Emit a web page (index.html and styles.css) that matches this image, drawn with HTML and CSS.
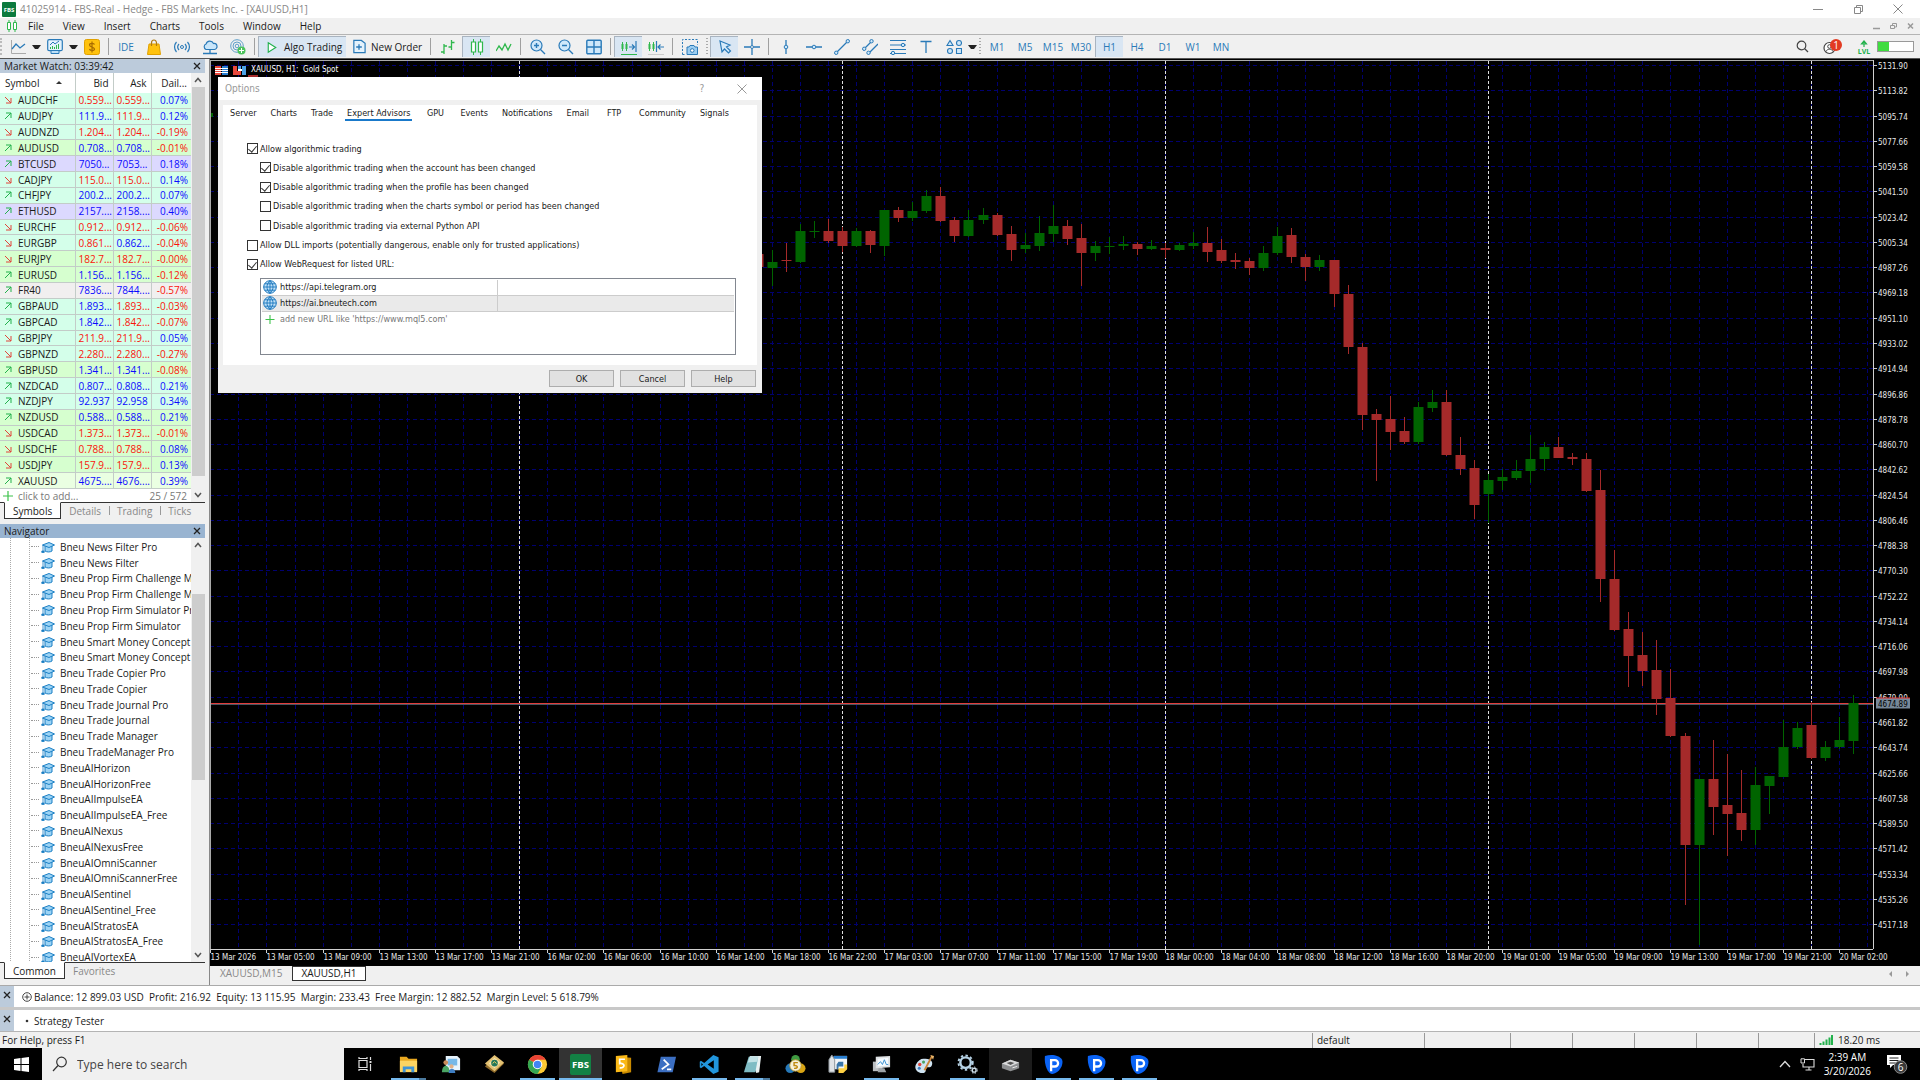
FILE: index.html
```html
<!DOCTYPE html>
<html lang="en">
<head>
    <meta charset="UTF-8">
    <title>41025914 - FBS-Real - Hedge - FBS Markets Inc. - [XAUUSD,H1]</title>
    <link rel="stylesheet" href="styles.css">
</head>
<body>
    <svg class="defs">
        <symbol id="i-up" viewBox="0 0 8 8"><path d="M1 7 7 1M2 1h5v5" fill="none" stroke="#22b14c"/></symbol>
        <symbol id="i-down" viewBox="0 0 8 8"><path d="M1 1 7 7M7 2v5H2" fill="none" stroke="#e0453a"/></symbol>
        <symbol id="i-plus" viewBox="0 0 10 10"><path d="M5 0v10M0 5h10" stroke="#3cc24a" stroke-width="1.2"/></symbol>
        <symbol id="i-ea" viewBox="0 0 14 12">
            <path d="M4 5v5c2 1.300 5 1.300 7 0V5" fill="#9bd3f5" stroke="#1b7fc4"/>
            <path d="M1.500 4 8 1.500 13.500 4 8 6.500z" fill="#9bd3f5" stroke="#1b7fc4"/>
            <path d="M2 4v6M.8 10h2.400v1.500H.8z" fill="#1b7fc4" stroke="#1b7fc4" stroke-width=".8"/>
        </symbol>
        <symbol id="i-globe" viewBox="0 0 14 14">
            <circle cx="7" cy="7" r="6.300" fill="#bfe0f7" stroke="#1a76bd"/>
            <path d="M7 .7v12.600M.7 7h12.600M1.700 3.800h10.600M1.700 10.200h10.600M7 .7c-4 3.500-4 9 0 12.600M7 .7c4 3.500 4 9 0 12.600" fill="none" stroke="#1a76bd" stroke-width=".9"/>
        </symbol>
        <symbol id="i-p" viewBox="0 0 22 22">
            <path d="M2 2C9 0 17 1 20 6c2 5-3 14-10 15C5 21 1 11 2 2z" fill="#0a63f5"/>
            <path d="M8.500 18V6.500h4a3.300 3.300 0 0 1 0 6.600H8.500" fill="none" stroke="#fff" stroke-width="2.400"/>
        </symbol>
        <symbol id="i-x" viewBox="0 0 8 8"><path d="M1 1 7 7M7 1 1 7" stroke="#222" stroke-width="1.300"/></symbol>
        <symbol id="i-chev-up" viewBox="0 0 8 6"><path d="M1 5 4 1.500 7 5" fill="none" stroke="#555" stroke-width="1.500"/></symbol>
        <symbol id="i-chev-down" viewBox="0 0 8 6"><path d="M1 1 4 4.500 7 1" fill="none" stroke="#555" stroke-width="1.500"/></symbol>
    </svg>
    <div class="app">
        <header class="titlebar">
            <svg class="logo" viewBox="0 0 14 15"><rect width="14" height="15" rx="1" fill="#0c7a3e"/><text x="7" y="10" text-anchor="middle" font-size="6" font-weight="700" fill="#fff">FBS</text></svg>
            <h1 class="title">41025914 - FBS-Real - Hedge - FBS Markets Inc. - [XAUUSD,H1]</h1>
            <div class="win-btns">
                <button aria-label="Minimize"><svg width="12" height="12" viewBox="0 0 12 12"><path d="M1 6.500h10" stroke="#888"/></svg></button>
                <button aria-label="Restore"><svg width="12" height="12" viewBox="0 0 12 12"><path d="M2.500 4.500h6v6h-6zM4.500 4.500v-2h6v6h-2" fill="none" stroke="#888"/></svg></button>
                <button aria-label="Close"><svg width="12" height="12" viewBox="0 0 12 12"><path d="M1.500 1.500l9 9M10.500 1.500l-9 9" stroke="#888"/></svg></button>
            </div>
        </header>
        <nav class="menubar">
            <svg class="menu-icon" width="12" height="12" viewBox="0 0 12 12"><path d="M3 0v12M9 0v12" stroke="#2fb84c"/><path d="M1.500 2.500h3v7h-3zM7.500 2.500h3v7h-3z" fill="#fff" stroke="#2fb84c"/></svg>
            <button>File</button>
            <button>View</button>
            <button>Insert</button>
            <button>Charts</button>
            <button>Tools</button>
            <button>Window</button>
            <button>Help</button>
            <div class="doc-btns">
                <button aria-label="Minimize chart"><svg width="9" height="8" viewBox="0 0 9 8"><path d="M1 6.500h7" stroke="#999" stroke-width="1.500"/></svg></button>
                <button aria-label="Restore chart"><svg width="9" height="8" viewBox="0 0 9 8"><path d="M1.500 3.500h4v3h-4zM3.500 3V1.500h4v3.500H6" fill="none" stroke="#999"/></svg></button>
                <button aria-label="Close chart"><svg width="9" height="8" viewBox="0 0 9 8"><path d="M2 1.500l5 5M7 1.500l-5 5" stroke="#999" stroke-width="1.500"/></svg></button>
            </div>
        </nav>
        <div class="toolbar">
            <span class="grip"></span>
            <button class="tool" aria-label="Line studies"><svg viewBox="0 0 16 16"><path d="M1.500 1v13.500H16" fill="none" stroke="#aaa"/><path d="M2 10 6 5l4 4 5-4" fill="none" stroke="#2a7ab8" stroke-width="1.300"/></svg></button>
            <button class="drop" aria-label="More line studies"></button>
            <button class="tool" aria-label="Templates"><svg viewBox="0 0 16 16"><rect x=".7" y=".7" width="14.600" height="11" rx="1.500" fill="#e4f2fc" stroke="#2a7ab8" stroke-width="1.200"/><path d="M4 12v2.500h8V12" fill="#bcdff7" stroke="#2a7ab8"/><path d="M3 6l3-3 2 2 4-3" fill="none" stroke="#2a7ab8"/><path d="M3.500 10V8M5.500 10V7M7.500 10V8M9.500 10V6M11.500 10V5" stroke="#2fb84c"/></svg></button>
            <button class="drop" aria-label="More templates"></button>
            <button class="tool" aria-label="Market"><svg viewBox="0 0 16 16"><rect x=".5" y=".5" width="15" height="15" rx="2" fill="#ffc20e" stroke="#e0a000"/><path d="M10.500 5.500C10 4 5.500 3.800 5.500 6S10.500 8 10.500 10s-4.500 2-5 0M8 2.500v11" fill="none" stroke="#a86b00" stroke-width="1.200"/></svg></button>
            <span class="sep"></span>
            <button class="tool">IDE</button>
            <button class="tool" aria-label="Shop"><svg viewBox="0 0 16 16"><path d="M3 5h10l1.500 10.500h-13z" fill="#ffc20e" stroke="#e0a000"/><path d="M5.500 7V4a2.500 3 0 0 1 5 0v3" fill="none" stroke="#b07a10" stroke-width="1.200"/></svg></button>
            <button class="tool" aria-label="Signals"><svg viewBox="0 0 16 16"><circle cx="8" cy="8" r="1.500" fill="none" stroke="#2a7ab8"/><path d="M5 5a4.500 4.500 0 0 0 0 6M11 5a4.500 4.500 0 0 1 0 6M2.500 3a7.500 7.500 0 0 0 0 10M13.500 3a7.500 7.500 0 0 1 0 10" fill="none" stroke="#2a7ab8" stroke-width="1.200"/></svg></button>
            <button class="tool" aria-label="VPS"><svg viewBox="0 0 16 16"><path d="M4 10.500a3 3 0 0 1 0-5.500 4 4 0 0 1 7.500-.5 3 3 0 0 1 1 6z" fill="#c9e6fa" stroke="#2a7ab8" stroke-width="1.200"/><path d="M8 11v3M1 14.500h14M6 14.500h4" stroke="#2a7ab8" stroke-width="1.300"/></svg></button>
            <button class="tool" aria-label="Copy trading"><svg viewBox="0 0 16 16"><circle cx="7" cy="7" r="6.300" fill="none" stroke="#5f9fc9"/><circle cx="7" cy="7" r="4" fill="none" stroke="#5f9fc9"/><circle cx="7" cy="7" r="1.800" fill="none" stroke="#5f9fc9"/><circle cx="11.500" cy="11.500" r="4" fill="#4cc35c"/><path d="M11.500 9v5M9 11.500h5" stroke="#fff"/></svg></button>
            <span class="sep"></span>
            <button class="wide on"><svg viewBox="0 0 16 16"><path d="M4 3l8 5-8 5z" fill="#fff" stroke="#22b14c" stroke-width="1.200"/></svg>Algo Trading</button>
            <button class="wide"><svg viewBox="0 0 16 16"><path d="M2.500 1.500h8l4 3v10h-12z" fill="#e4f2fc" stroke="#2a7ab8" stroke-width="1.300"/><path d="M8 5.500v6M5 8.500h6" stroke="#2a7ab8" stroke-width="1.400"/></svg>New Order</button>
            <span class="sep"></span>
            <button class="tool" aria-label="Bar chart"><svg viewBox="0 0 16 16"><path d="M4 5v10M1 13h3M4 7h3M11.500 1v10M8.500 8h3M11.500 3.500h3" fill="none" stroke="#2fb84c" stroke-width="1.300"/></svg></button>
            <button class="tool on" aria-label="Candles"><svg viewBox="0 0 16 16"><path d="M4.500 0v16M11.500 0v16" stroke="#2fb84c"/><path d="M2.500 3h4v10h-4zM9.500 3h4v10h-4z" fill="#fff" stroke="#2fb84c" stroke-width="1.200"/></svg></button>
            <button class="tool" aria-label="Line chart"><svg viewBox="0 0 16 16"><path d="M0 12l3-5 3 4 3-6 3 6 3-6" fill="none" stroke="#2fb84c" stroke-width="1.300"/></svg></button>
            <span class="sep"></span>
            <button class="tool" aria-label="Zoom in"><svg viewBox="0 0 16 16"><circle cx="6.500" cy="6.500" r="5.500" fill="#cfe8fa" stroke="#2a7ab8" stroke-width="1.200"/><path d="M10.500 10.500 15 15M6.500 4v5M4 6.500h5" stroke="#2a7ab8" stroke-width="1.400"/></svg></button>
            <button class="tool" aria-label="Zoom out"><svg viewBox="0 0 16 16"><circle cx="6.500" cy="6.500" r="5.500" fill="#cfe8fa" stroke="#2a7ab8" stroke-width="1.200"/><path d="M10.500 10.500 15 15M4 6.500h5" stroke="#2a7ab8" stroke-width="1.400"/></svg></button>
            <button class="tool" aria-label="Tile windows"><svg viewBox="0 0 16 16"><rect x=".8" y="1.300" width="14.400" height="13.400" rx="1" fill="#cfe8fa" stroke="#2a7ab8" stroke-width="1.400"/><path d="M8 1v14M1 8h14" stroke="#2a7ab8" stroke-width="1.400"/></svg></button>
            <span class="sep"></span>
            <button class="tool on" aria-label="Auto scroll"><svg viewBox="0 0 16 16"><path d="M1.500 3v9M5.500 3v9M0 15.500h16" stroke="#2fb84c"/><path d="M.5 5h2v5h-2zM4.500 5h2v5h-2z" fill="#2fb84c"/><path d="M8 8h5M11 5.500 13.500 8 11 10.500M15 2v11" fill="none" stroke="#2a7ab8" stroke-width="1.200"/></svg></button>
            <button class="tool" aria-label="Chart shift"><svg viewBox="0 0 16 16"><path d="M1.500 3v9M5.500 3v9" stroke="#2fb84c"/><path d="M.5 5h2v5h-2zM4.500 5h2v5h-2z" fill="#2fb84c"/><path d="M10 8h6M12.500 5.500 10 8l2.500 2.500M8.500 2v11" fill="none" stroke="#2a7ab8" stroke-width="1.200"/><path d="M0 15.500h16" stroke="#ccc"/></svg></button>
            <span class="sep"></span>
            <button class="tool" aria-label="Screenshot"><svg viewBox="0 0 16 16"><path d="M.5 15.500V.5h15V6M.5 15.500H4" fill="none" stroke="#2a7ab8" stroke-dasharray="2 1.500"/><path d="M5 8h2l1-1.500h4L13 8h2.500v7.500H5z" fill="#9ccdf0" stroke="#2a7ab8"/><circle cx="10.200" cy="11.500" r="1.800" fill="#fff" stroke="#2a7ab8"/></svg></button>
            <span class="sep dots"></span>
            <button class="tool on" aria-label="Cursor"><svg viewBox="0 0 16 16"><path d="M3 2l10 4-3.500 2 4 4-2 2-4-4L5 13z" fill="#d6ebfa" stroke="#2a7ab8" stroke-width="1.200"/></svg></button>
            <button class="tool" aria-label="Crosshair"><svg viewBox="0 0 16 16"><path d="M8 0v6M8 10v6M0 8h6M10 8h6" stroke="#2a7ab8" stroke-width="1.300"/><circle cx="8" cy="8" r="1.500" fill="none" stroke="#2a7ab8"/></svg></button>
            <span class="sep"></span>
            <button class="tool" aria-label="Vertical line"><svg viewBox="0 0 16 16"><path d="M8 1v5M8 10v5" stroke="#2a7ab8" stroke-width="1.300"/><circle cx="8" cy="8" r="1.800" fill="#cfe8fa" stroke="#2a7ab8"/></svg></button>
            <button class="tool" aria-label="Horizontal line"><svg viewBox="0 0 16 16"><path d="M0 8h6M10 8h6" stroke="#2a7ab8" stroke-width="1.300"/><circle cx="8" cy="8" r="1.800" fill="#cfe8fa" stroke="#2a7ab8"/></svg></button>
            <button class="tool" aria-label="Trend line"><svg viewBox="0 0 16 16"><path d="M3 13 13 3" stroke="#2a7ab8" stroke-width="1.300"/><circle cx="2.200" cy="13.800" r="1.700" fill="#cfe8fa" stroke="#2a7ab8"/><circle cx="13.800" cy="2.200" r="1.700" fill="#cfe8fa" stroke="#2a7ab8"/></svg></button>
            <button class="tool" aria-label="Channel"><svg viewBox="0 0 16 16"><path d="M3 9 9 3M6 15 16 5" stroke="#2a7ab8" stroke-width="1.300"/><circle cx="2.200" cy="9.800" r="1.700" fill="#cfe8fa" stroke="#2a7ab8"/><circle cx="9.500" cy="2.200" r="1.700" fill="#cfe8fa" stroke="#2a7ab8"/><circle cx="6.500" cy="13.800" r="1.700" fill="#cfe8fa" stroke="#2a7ab8"/></svg></button>
            <button class="tool" aria-label="Fibonacci"><svg viewBox="0 0 16 16"><path d="M0 1.500h16M0 6h16M0 10.500h16M0 14.500h16" stroke="#2a7ab8" stroke-width="1.200"/><circle cx="13" cy="6" r="1.700" fill="#cfe8fa" stroke="#2a7ab8"/><circle cx="3" cy="14" r="1.700" fill="#cfe8fa" stroke="#2a7ab8"/></svg></button>
            <button class="tool" aria-label="Text"><svg viewBox="0 0 16 16"><path d="M2.500 2.500h11M8 2.500V14" stroke="#2a7ab8" stroke-width="1.300"/></svg></button>
            <button class="tool" aria-label="Shapes"><svg viewBox="0 0 16 16"><path d="M4 1.500 7 6.500H1zM10.500 9.500h5v5h-5z" fill="#cfe8fa" stroke="#2a7ab8" stroke-width="1.100"/><circle cx="13" cy="4" r="2.500" fill="#cfe8fa" stroke="#2a7ab8" stroke-width="1.100"/><circle cx="4" cy="12" r="2.500" fill="#cfe8fa" stroke="#2a7ab8" stroke-width="1.100"/></svg></button>
            <button class="drop" aria-label="More shapes"></button>
            <span class="sep dots"></span>
            <button class="tool">M1</button>
            <button class="tool">M5</button>
            <button class="tool">M15</button>
            <button class="tool">M30</button>
            <button class="tool on">H1</button>
            <button class="tool">H4</button>
            <button class="tool">D1</button>
            <button class="tool">W1</button>
            <button class="tool">MN</button>
            <div class="tool-right">
                <button aria-label="Search"><svg width="13" height="13" viewBox="0 0 13 13"><circle cx="5.500" cy="5.500" r="4.300" fill="none" stroke="#444" stroke-width="1.200"/><path d="M8.500 8.500 12 12" stroke="#444" stroke-width="1.200"/></svg></button>
                <button aria-label="Account"><svg width="20" height="16" viewBox="0 0 20 16"><circle cx="6.500" cy="9" r="5.500" fill="#fff" stroke="#444" stroke-width="1.200"/><circle cx="6.500" cy="7.500" r="1.800" fill="none" stroke="#444"/><path d="M3 12.500c1-3 6-3 7 0" fill="none" stroke="#444"/><circle cx="13" cy="6" r="6" fill="#e23b22"/><text x="13" y="9.500" text-anchor="middle" font-size="10" fill="#fff">1</text></svg></button>
                <button aria-label="Level"><svg width="14" height="14" viewBox="0 0 14 14"><path d="M7 7V2M4.500 4 7 1l2.500 3z" fill="none" stroke="#22b14c" stroke-width="1.200"/><text x="7" y="13.500" text-anchor="middle" font-size="7" font-weight="700" fill="#22b14c">LVL</text></svg></button>
                <div class="load"><i></i></div>
            </div>
        </div>
        <main class="main">
            <aside class="side">
                <section class="panel market">
                    <h2 class="panel-title">Market Watch: 03:39:42<button aria-label="Close Market Watch"><svg width="8" height="8"><use href="#i-x"/></svg></button></h2>
                    <div class="panel-body">
                        <div class="watch">
                            <table class="quotes">
                                <colgroup><col class="c-sym"><col class="c-num"><col class="c-num"><col class="c-day"></colgroup>
                                <thead><tr><th>Symbol<i class="sort"></i></th><th>Bid</th><th>Ask</th><th>Dail...</th></tr></thead>
                                <tbody id="quotes"></tbody>
                            </table>
                            <div class="add-row"><svg width="10" height="10"><use href="#i-plus"/></svg><span>click to add...</span><b>25 / 572</b></div>
                        </div>
                        <div class="scroll watch-scroll"><svg width="8" height="6"><use href="#i-chev-up"/></svg><i class="thumb"></i><i class="rest"></i><svg width="8" height="6"><use href="#i-chev-down"/></svg></div>
                    </div>
                    <div class="tabs">
                        <button class="active">Symbols</button><button>Details</button><button>Trading</button><button>Ticks</button>
                    </div>
                </section>
                <section class="panel navigator">
                    <h2 class="panel-title focus">Navigator<button aria-label="Close Navigator"><svg width="8" height="8"><use href="#i-x"/></svg></button></h2>
                    <div class="panel-body">
                        <ul class="tree" id="tree"></ul>
                        <div class="scroll nav-scroll"><svg width="8" height="6"><use href="#i-chev-up"/></svg><i class="lead"></i><i class="thumb"></i><i class="rest"></i><svg width="8" height="6"><use href="#i-chev-down"/></svg></div>
                    </div>
                    <div class="tabs nav-tabs">
                        <button class="active">Common</button><button>Favorites</button>
                    </div>
                </section>
            </aside>
            <section class="work">
                <div class="chart" id="chart">
                    <svg class="plot" id="plot"></svg>
                    <div class="chart-title">
                        <svg width="13" height="9" viewBox="0 0 13 9"><path d="M0 0h6v9H0z" fill="#e8483c"/><path d="M7 0h6v9H7z" fill="#2a7fd0"/><path d="M0 2.500h13M0 4.500h13M0 6.500h13" stroke="#fff"/></svg>
                        <svg width="13" height="9" viewBox="0 0 13 9"><path d="M0 0h4v5h4v4H0z" fill="#e8483c"/><path d="M9 0h4v9H9zM5 0h3v3H5z" fill="#4ea3e6"/><path d="M5 3h4v2H5z" fill="#fff"/></svg>
                        <span>XAUUSD, H1:&nbsp; Gold Spot</span>
                    </div>
                </div>
                <div class="doc-tabs">
                    <button>XAUUSD,M15</button>
                    <button class="active">XAUUSD,H1</button>
                    <span class="doc-arrows"><i class="prev"></i><i class="next"></i></span>
                </div>
            </section>
            <section class="dialog" role="dialog" aria-label="Options">
                <div class="dialog-head">
                    <h2>Options</h2>
                    <button aria-label="Context help">?</button>
                    <button aria-label="Close dialog"><svg width="10" height="10" viewBox="0 0 10 10"><path d="M.5.5l9 9M9.500.5l-9 9" stroke="#999"/></svg></button>
                </div>
                <div class="dialog-body">
                    <div class="pages">
                        <button>Server</button>
                        <button>Charts</button>
                        <button>Trade</button>
                        <button class="active">Expert Advisors</button>
                        <button>GPU</button>
                        <button>Events</button>
                        <button>Notifications</button>
                        <button>Email</button>
                        <button>FTP</button>
                        <button>Community</button>
                        <button>Signals</button>
                    </div>
                    <div class="options">
                        <label><input type="checkbox" checked>Allow algorithmic trading</label>
                        <label class="sub"><input type="checkbox" checked>Disable algorithmic trading when the account has been changed</label>
                        <label class="sub"><input type="checkbox" checked>Disable algorithmic trading when the profile has been changed</label>
                        <label class="sub"><input type="checkbox">Disable algorithmic trading when the charts symbol or period has been changed</label>
                        <label class="sub"><input type="checkbox">Disable algorithmic trading via external Python API</label>
                        <label><input type="checkbox">Allow DLL imports (potentially dangerous, enable only for trusted applications)</label>
                        <label><input type="checkbox" checked>Allow WebRequest for listed URL:</label>
                    </div>
                    <ul class="urls">
                        <li><span><svg width="14" height="14"><use href="#i-globe"/></svg>https://api.telegram.org</span></li>
                        <li class="sel"><span><svg width="14" height="14"><use href="#i-globe"/></svg>https://ai.bneutech.com</span></li>
                        <li class="new"><span><svg width="14" height="9"><use href="#i-plus"/></svg>add new URL like 'https://www.mql5.com'</span></li>
                    </ul>
                </div>
                <div class="dialog-foot">
                    <button>OK</button>
                    <button>Cancel</button>
                    <button>Help</button>
                </div>
            </section>
        </main>
        <section class="dock balance">
            <button class="dock-x" aria-label="Close Toolbox"><svg width="8" height="8"><use href="#i-x"/></svg></button>
            <svg width="10" height="10" viewBox="0 0 10 10"><circle cx="5" cy="5" r="4.300" fill="none" stroke="#444"/><path d="M5 2.500v5M2.500 5h5" stroke="#444"/></svg>
            <p>Balance: 12 899.03 USD&nbsp; Profit: 216.92&nbsp; Equity: 13 115.95&nbsp; Margin: 233.43&nbsp; Free Margin: 12 882.52&nbsp; Margin Level: 5 618.79%</p>
        </section>
        <section class="dock tester">
            <button class="dock-x" aria-label="Close Strategy Tester"><svg width="8" height="8"><use href="#i-x"/></svg></button>
            <svg width="10" height="10" viewBox="0 0 10 10"><circle cx="5" cy="5" r="1.300" fill="#333"/></svg>
            <p>Strategy Tester</p>
        </section>
        <footer class="status">
            <span class="hint">For Help, press F1</span>
            <span class="cell w112">default</span>
            <span class="cell w86"></span>
            <span class="cell w62"></span>
            <span class="cell w62"></span>
            <span class="cell w62"></span>
            <span class="cell w62"></span>
            <span class="cell w56"></span>
            <span class="cell w106"><svg width="14" height="10" viewBox="0 0 14 10"><path d="M1.500 8v2M4.500 6.500V10M7.500 4.500V10M10.500 2.500V10M13 0v10" stroke="#22b14c" stroke-width="2"/></svg>18.20 ms</span>
        </footer>
        <div class="taskbar">
            <button class="start" aria-label="Start"><svg width="15" height="15" viewBox="0 0 15 15"><path d="M0 2l6.500-1v6H0zM7.500.9 15 0v7H7.500zM0 8h6.500v6L0 13zM7.500 8H15v7l-7.500-1z" fill="#fff"/></svg></button>
            <div class="search">
                <svg width="16" height="16" viewBox="0 0 16 16"><circle cx="9.500" cy="6" r="4.800" fill="none" stroke="#333" stroke-width="1.200"/><path d="M6 9.500 1 15" stroke="#333" stroke-width="1.200"/></svg>
                <input type="text" placeholder="Type here to search" aria-label="Type here to search">
            </div>
            <button class="task" aria-label="Task View"><svg width="15" height="14" viewBox="0 0 15 14"><path d="M1 3.500h8v7H1zM1 0v1.500h8V0M1 14v-1.500h8V14M12.500 0v3M12.500 7v7" fill="none" stroke="#ddd" stroke-width="1.200"/><path d="M11.500 4h2v2h-2z" fill="#ddd"/></svg></button>
            <button class="task run more" aria-label="File Explorer"><svg viewBox="0 0 22 22"><path d="M2 3h7l2 2h9v13H2z" fill="#e9a820"/><path d="M2 7h18v12H2z" fill="#fcd462"/><path d="M5 13h12v6h-3v-3H8v3H5z" fill="#3f94d6"/></svg></button>
            <button class="task" aria-label="Server Manager"><svg viewBox="0 0 22 22"><path d="M5 2h12l3 3v12H5z" fill="#e8f4fd"/><path d="M7 5h10v7H7z" fill="#76b8e8"/><circle cx="5" cy="9" r="2.500" fill="#c98b5a"/><circle cx="11" cy="13" r="2.200" fill="#e0b088"/><path d="M1 19c0-9 8-9 8 0z" fill="#4aa564"/><path d="M8 20c0-6 7-6 7 0z" fill="#3f7fc4"/></svg></button>
            <button class="task" aria-label="Trade Tools"><svg viewBox="0 0 22 22"><path d="M1 13 11 2l10 8-10 10z" fill="#8f6a2a"/><path d="M1 10 11 1l10 8-10 9z" fill="#e3c173"/><path d="M5 10l6-6 6 5-6 6z" fill="#f6e5b0"/><circle cx="11" cy="9.500" r="3.500" fill="#23765a"/><path d="M9 10l2-2 2 2" stroke="#ffd95c" fill="none"/></svg></button>
            <button class="task run" aria-label="Chrome"><svg viewBox="0 0 22 22"><circle cx="11" cy="11" r="10" fill="#fcc934"/><path d="M11 11 2.300 6A10 10 0 0 1 19.700 6H11z" fill="#ea4335"/><path d="M11 11l-8.700-5A10 10 0 0 0 11 21l4.300-7.500z" fill="#34a853"/><circle cx="11" cy="11" r="5" fill="#fff"/><circle cx="11" cy="11" r="3.900" fill="#4285f4"/></svg></button>
            <button class="task run cur" aria-label="FBS"><svg viewBox="0 0 22 22"><rect width="22" height="22" rx="2" fill="#138044"/><text x="11" y="15" text-anchor="middle" font-size="10" font-weight="700" fill="#fff">FBS</text></svg></button>
            <button class="task" aria-label="MetaEditor"><svg viewBox="0 0 22 22"><path d="M6 3l13 1v15l-9 2z" fill="#c98a00"/><path d="M3 2l12-1v17L3 19z" fill="#fbb917"/><path d="M12.500 5.500H7V10c6-1 6 5 0 4.500" fill="none" stroke="#fff" stroke-width="1.800"/></svg></button>
            <button class="task" aria-label="PowerShell"><svg viewBox="0 0 22 22"><path d="M5 3h16l-3.500 16h-16z" fill="#3c6fc2"/><path d="M8 6l5 5-7 5M11.500 16H16" fill="none" stroke="#fff" stroke-width="1.800"/></svg></button>
            <button class="task run" aria-label="Visual Studio Code"><svg viewBox="0 0 22 22"><path d="M15 1l5.500 2.500v15L15 21 5.500 12.500 2 15 .8 14V8L2 7l3.500 2.500zM15.500 6.500 9 11l6.500 4.500zM2.500 9.300v3.400L4.200 11z" fill="#2196dd" fill-rule="evenodd"/></svg></button>
            <button class="task run more" aria-label="Notepad"><svg viewBox="0 0 22 22"><path d="M8 2h12l-2 17-3 1z" fill="#e9f1f2"/><path d="M7 3h10l-3 16H2z" fill="#7fbcc4"/><path d="M8 3h9l-1 5-10 1z" fill="#c2e2e6"/></svg></button>
            <button class="task" aria-label="MetaTrader"><svg viewBox="0 0 22 22"><circle cx="11" cy="5.500" r="4.500" fill="#3f9a41"/><circle cx="5.500" cy="15" r="5" fill="#2678b8"/><circle cx="16.500" cy="15" r="5" fill="#d9a514"/><circle cx="11" cy="12" r="6" fill="#f7f1dc" stroke="#b99a3a"/><path d="M13.500 9H9.500v3c4.500-.5 4.500 3.500 0 3" fill="none" stroke="#c08a10" stroke-width="1.500"/></svg></button>
            <button class="task" aria-label="Python"><svg viewBox="0 0 22 22"><path d="M6 2h14v14H6z" fill="#f3f6f8"/><path d="M6 2h14v3H6z" fill="#2a7fd0"/><path d="M4 1l3 5v13H1V6z" fill="#dfe3e6" stroke="#8a9299"/><path d="M11 8h5v5h-5v3H9v-5z" fill="#3a76a8"/><path d="M17 11h3v5l-4 4h-5v-5h6z" fill="#fdd043"/></svg></button>
            <button class="task run" aria-label="Performance Monitor"><svg viewBox="0 0 22 22"><path d="M2 8h10v10H2z" fill="#b9bdc0"/><path d="M5 3l15-1v12L5 15z" fill="#dfe2e4"/><path d="M7 5l11-1v8L7 13z" fill="#f6fbff"/><path d="M7 11l3-3 2 3 2-5 2 5h2" fill="none" stroke="#3a90d0"/><path d="M8 15h6l2 4H7z" fill="#9ea3a7"/></svg></button>
            <button class="task" aria-label="Paint"><svg viewBox="0 0 22 22"><path d="M10 5c8-1 11 4 8 8-2 2-4 0-5 2s0 5-4 5C3 20 0 15 2 11s5-6 8-6z" fill="#cfe3f1"/><circle cx="6" cy="11" r="1.800" fill="#e0453a"/><circle cx="10" cy="8.500" r="1.600" fill="#4aa564"/><circle cx="5.500" cy="15" r="1.600" fill="#3f7fc4"/><path d="M19 2 11 17" stroke="#c9853a" stroke-width="2"/><path d="M17 1l4 1-1 4z" fill="#e9b56a"/></svg></button>
            <button class="task run" aria-label="Services"><svg viewBox="0 0 22 22"><circle cx="9" cy="9" r="5.500" fill="none" stroke="#b7d3e6" stroke-width="2.500"/><circle cx="9" cy="9" r="7.500" fill="none" stroke="#b7d3e6" stroke-width="2" stroke-dasharray="2.500 2.500"/><circle cx="18" cy="17" r="2" fill="none" stroke="#cfdfea" stroke-width="1.500"/><circle cx="18" cy="17" r="3.300" fill="none" stroke="#cfdfea" stroke-dasharray="1.500 1.500"/></svg></button>
            <button class="task hover" aria-label="Device"><svg viewBox="0 0 22 22"><path d="M2 10 11 6l9 3v6l-9 3-9-3z" fill="#8d8f91"/><path d="M2 10 11 6l9 3-9 4z" fill="#d9dadb"/><path d="M7 9.500l4-1.500 4 1.500-4 2z" fill="#555"/><path d="M13 14.500l5-1.500" stroke="#eee"/></svg></button>
            <button class="task run" aria-label="Plus terminal 1"><svg><use href="#i-p"/></svg></button>
            <button class="task run" aria-label="Plus terminal 2"><svg><use href="#i-p"/></svg></button>
            <button class="task run" aria-label="Plus terminal 3"><svg><use href="#i-p"/></svg></button>
            <div class="tray">
                <svg width="12" height="8" viewBox="0 0 12 8"><path d="M1 7 6 1.500 11 7" fill="none" stroke="#ddd" stroke-width="1.300"/></svg>
                <svg width="15" height="13" viewBox="0 0 15 13"><path d="M4 1.500h10v7.500H3V6M9 9v2.500M5.500 12h6" fill="none" stroke="#ddd" stroke-width="1.100"/><path d="M1 .8h3.500V5H1z" fill="#000" stroke="#ddd"/></svg>
                <time class="clock"><span>2:39 AM</span><span>3/20/2026</span></time>
                <svg width="22" height="20" viewBox="0 0 22 20"><path d="M1 1h14v10H7l-3 3v-3H1z" fill="#fff"/><path d="M3.500 4h9M3.500 6.500h9M3.500 9h6" stroke="#222"/><circle cx="14.500" cy="13" r="6.300" fill="#3a3a3a" stroke="#888"/><text x="14.500" y="16.500" text-anchor="middle" font-size="10" fill="#fff">6</text></svg>
            </div>
        </div>
    </div>
    <script src="script.js"></script>
</body>
</html>
```
FILE: styles.css
```css
*{
    box-sizing: border-box;
}
body{
    margin: 0;
    font-family: "Open Sans", "Noto Sans", sans-serif;
    font-size: 10px;
    line-height: 14px;
    color: #1a1a1a;
    background: #f0f0f0;
}
h1,h2,p,ul{
    margin: 0;
    padding: 0;
    font-size: 10px;
    font-weight: normal;
    list-style: none;
}
button{
    padding: 0;
    border: 0;
    background: none;
    font: inherit;
    color: inherit;
    white-space: nowrap;
}
svg{
    display: block;
    flex: none;
}
.defs{
    display: none;
}
.app{
    display: flex;
    flex-direction: column;
    height: 100vh;
    overflow: hidden;
}
/* title and menu */
.titlebar{
    display: flex;
    align-items: center;
    height: 18px;
    padding-left: 2px;
    background: #fff;
}
.logo{
    width: 14px;
    height: 15px;
    margin-right: 4px;
}
.title{
    color: #888;
}
.win-btns{
    display: flex;
    margin-left: auto;
    padding-right: 2px;
}
.win-btns button{
    display: flex;
    justify-content: center;
    width: 40px;
}
.menubar{
    display: flex;
    align-items: center;
    gap: 19px;
    height: 17px;
    padding-left: 6px;
    border-bottom: 1px solid #b4b4b4;
}
.menubar .menu-icon{
    margin-right: -9px;
}
.doc-btns{
    display: flex;
    margin-left: auto;
    padding-right: 1px;
}
.doc-btns button{
    display: flex;
    justify-content: center;
    width: 17px;
}
/* toolbar */
.toolbar{
    display: flex;
    align-items: stretch;
    height: 24px;
    padding: 1px 0;
    color: #2a7ab8;
    border-bottom: 1px solid #555;
}
.grip{
    width: 4px;
    margin: 2px 0;
    border-left: 2px dotted #bbb;
}
.sep{
    flex: none;
    width: 6px;
    margin: 2px 0;
    background: linear-gradient(#a0a0a0,#a0a0a0) 2px 0 / 1px 100% no-repeat;
}
.sep.dots{
    background: repeating-linear-gradient(#aaa 0 1px, transparent 1px 3px) 2px 0 / 2px 100% no-repeat;
}
.tool{
    display: flex;
    flex: none;
    align-items: center;
    justify-content: center;
    width: 28px;
}
.tool svg{
    width: 16px;
    height: 16px;
}
.tool.on,.wide.on{
    background: #d9e6f3;
    border-top: 1px solid #a9b4c0;
    border-left: 1px solid #a9b4c0;
}
.drop{
    flex: none;
    width: 9px;
}
.drop::after{
    content: "";
    display: block;
    border: 3px solid transparent;
    border-top: 4px solid #222;
    border-bottom: 0;
}
.wide{
    display: flex;
    flex: none;
    align-items: center;
    gap: 4px;
    width: 82px;
    padding: 0 5px;
    color: #1a1a1a;
}
.wide.on{
    width: 88px;
}
.wide svg{
    width: 16px;
    height: 15px;
}
.tool-right{
    display: flex;
    align-items: center;
    gap: 14px;
    margin-left: auto;
    padding-right: 6px;
}
.load{
    width: 37px;
    height: 11px;
    margin-left: -8px;
    border: 1px solid #999;
    background: #fff;
}
.load i{
    display: block;
    width: 30%;
    height: 100%;
    background: #3fdc3f;
}
/* left panels */
.main{
    position: relative;
    display: flex;
    flex: 1;
    min-height: 0;
}
.side{
    display: flex;
    flex-direction: column;
    width: 205px;
}
.panel{
    display: flex;
    flex-direction: column;
    min-height: 0;
}
.market{
    flex: 465;
}
.navigator{
    flex: 461;
}
.panel-title{
    display: flex;
    align-items: center;
    justify-content: space-between;
    height: 14px;
    padding: 0 4px;
    background: #bccbdb;
}
.panel-title.focus{
    background: #99b4d1;
}
.panel-body{
    display: flex;
    flex: 1;
    min-height: 0;
    background: #fff;
}
.watch{
    display: flex;
    flex-direction: column;
    flex: 1;
}
.quotes{
    flex: 1;
    width: 100%;
    border-collapse: collapse;
    table-layout: fixed;
    white-space: nowrap;
    line-height: 12px;
}
.c-sym{
    width: 75px;
}
.c-num{
    width: 38px;
}
.quotes th{
    height: 20px;
    padding: 0 4px;
    font-weight: normal;
    text-align: right;
}
.quotes th:first-child{
    padding-left: 5px;
    text-align: left;
}
.quotes th+th,.quotes td+td{
    border-left: 1px solid #c3ccc8;
}
.sort{
    display: inline-block;
    margin: 0 0 3px 17px;
    border: 3px solid transparent;
    border-top: 0;
    border-bottom-color: #333;
}
.quotes td{
    padding: 0 3px;
    text-align: right;
    border-bottom: 1px solid #c3ccc8;
}
.quotes td:first-child{
    text-align: left;
}
.sym{
    display: flex;
    align-items: center;
    gap: 6px;
    padding-left: 1px;
}
.mint{
    background: #d4ffea;
}
.green{
    background: #d6ffcf;
}
.violet{
    background: #dcd9fe;
}
.grey{
    background: #f1efef;
}
.pale{
    background: #eaffe2;
}
.b{
    color: #0a0aff;
}
.r{
    color: #fa140a;
}
.add-row{
    display: flex;
    align-items: center;
    gap: 5px;
    height: 13px;
    padding: 0 4px 0 3px;
    color: #777;
}
.add-row b{
    margin-left: auto;
    font-weight: normal;
}
.scroll{
    display: flex;
    flex-direction: column;
    align-items: center;
    width: 14px;
    padding: 4px 0;
    background: #f0f0f0;
}
.thumb{
    width: 13px;
    margin: 4px 0;
    background: #cdcdcd;
}
.watch-scroll .thumb{
    flex: 385;
}
.watch-scroll .rest{
    flex: 12;
}
.nav-scroll .lead{
    flex: 42;
}
.nav-scroll .thumb{
    flex: 184;
}
.nav-scroll .rest{
    flex: 166;
}
.tabs{
    display: flex;
    align-items: flex-start;
    height: 22px;
    padding-left: 4px;
    border-top: 1px solid #333;
    color: #888;
}
.tabs button{
    height: 15px;
    padding: 0 8px;
    line-height: 14px;
}
.tabs button+button+button{
    background: linear-gradient(#999,#999) 0 3px / 1px 9px no-repeat;
}
.tabs .active{
    margin-top: -1px;
    height: 17px;
    color: #1a1a1a;
    background: #fff;
    border: 1px solid #333;
    border-top-color: #fff;
}
.tree{
    display: flex;
    flex-direction: column;
    flex: 1;
    min-width: 0;
    margin-bottom: -3px;
    padding: 1px 0 0 10px;
    overflow: hidden;
    background: repeating-linear-gradient(#aaa 0 1px, transparent 1px 2px) 10px 0 / 1px 100% no-repeat,
        repeating-linear-gradient(#aaa 0 1px, transparent 1px 2px) 29px 0 / 1px 100% no-repeat;
}
.tree li{
    display: flex;
    align-items: center;
    flex: 1;
    min-height: 0;
    gap: 5px;
    padding-left: 21px;
    white-space: nowrap;
}
.tree li::before{
    content: "";
    flex: none;
    width: 8px;
    margin-right: -3px;
    border-top: 1px dotted #999;
}
.nav-tabs{
    position: relative;
    height: 23px;
    background: #f0f0f0;
}
/* chart */
.work{
    display: flex;
    flex-direction: column;
    flex: 1;
    min-width: 0;
    margin-left: 4px;
    border-left: 1px solid #888;
}
.chart{
    position: relative;
    flex: 1;
    min-height: 0;
    padding-top: 1px;
    background: #000;
}
.plot{
    width: 100%;
    height: 100%;
}
.plot text,.chart-title{
    font-family: "DejaVu Sans Condensed", "DejaVu Sans", sans-serif;
    font-size: 8px;
    fill: #e8e8e8;
}
.chart-title{
    position: absolute;
    top: 4px;
    left: 5px;
    display: flex;
    align-items: center;
    gap: 5px;
    color: #fff;
}
.doc-tabs{
    display: flex;
    height: 19px;
    color: #888;
    line-height: 13px;
}
.doc-tabs button{
    height: 15px;
    padding: 0 10px;
}
.doc-tabs .active{
    padding: 0 8px;
    color: #1a1a1a;
    background: #fff;
    border: 1px solid #333;
}
.doc-arrows{
    display: flex;
    align-items: center;
    gap: 14px;
    margin-left: auto;
    padding: 0 11px 4px 0;
}
.doc-arrows i{
    border: 3px solid transparent;
}
.doc-arrows .prev{
    border-left: 0;
    border-right-color: #999;
}
.doc-arrows .next{
    border-right: 0;
    border-left-color: #999;
}
/* options window */
.dialog{
    position: absolute;
    top: 18px;
    left: 218px;
    width: 544px;
    padding-bottom: 6px;
    background: #f0f0f0;
    font-family: "DejaVu Sans Condensed", "DejaVu Sans", sans-serif;
    font-size: 9px;
}
.dialog-head{
    display: flex;
    align-items: center;
    height: 23px;
    padding: 0 0 0 7px;
    color: #999;
    background: #fff;
}
.dialog-head h2{
    flex: 1;
}
.dialog-head button{
    display: flex;
    justify-content: center;
    width: 40px;
    font-size: 10px;
}
.dialog-body{
    margin: 5px 5px 0;
    padding-bottom: 10px;
    background: #fff;
}
.pages{
    display: flex;
}
.pages button{
    min-width: 36px;
    height: 16px;
    padding: 0 7px;
}
.pages .active{
    background: linear-gradient(#1979ca,#1979ca) center bottom / 67px 2px no-repeat;
}
.options{
    display: grid;
    grid-auto-rows: 1fr;
    height: 135px;
    margin: 18px 0 4px 24px;
}
.options label{
    display: flex;
    align-items: center;
    gap: 2px;
}
.options .sub{
    padding-left: 13px;
}
.options input{
    appearance: none;
    width: 11px;
    height: 11px;
    margin: 0;
    border: 1px solid #333;
    background: #fff;
}
.options input:checked{
    display: flex;
    justify-content: center;
}
.options input:checked::after{
    content: "";
    width: 4px;
    height: 7px;
    border: solid #333;
    border-width: 0 1px 1px 0;
    transform: rotate(40deg);
}
.urls{
    height: 77px;
    margin: 0 21px 0 37px;
    padding: 1px;
    border: 1px solid #828790;
    font-size: 9px;
}
.urls li{
    height: 16px;
    border-bottom: 1px solid #ccc;
    background: linear-gradient(#ccc,#ccc) 235px 0 / 1px 100% no-repeat;
}
.urls .sel{
    background-color: #eaeaea;
}
.urls span{
    display: flex;
    align-items: center;
    gap: 3px;
    padding-left: 1px;
}
.urls .new{
    border: 0;
    background: none;
    color: #777;
}
.dialog-foot{
    display: flex;
    justify-content: flex-end;
    gap: 6px;
    padding: 5px 6px 0;
}
.dialog-foot button{
    width: 65px;
    height: 17px;
    border: 1px solid #adadad;
    background: #e1e1e1;
}
/* bottom */
.dock{
    display: flex;
    align-items: center;
    gap: 2px;
    background: #fff;
    border-top: 1px solid #aaa;
}
.dock-x{
    align-self: stretch;
    width: 14px;
    margin-right: 6px;
    padding: 3px;
    background: #bccbdb;
}
.balance{
    height: 22px;
}
.tester{
    height: 24px;
    border-top: 3px solid #c8c8c8;
}
.dock-x svg{
    margin-bottom: 4px;
}
.status{
    display: flex;
    align-items: center;
    height: 17px;
    border-top: 1px solid #b4b4b4;
}
.hint{
    flex: 1;
    padding-left: 2px;
}
.cell{
    display: flex;
    align-items: center;
    gap: 5px;
    height: 15px;
    padding-left: 4px;
    border-left: 1px solid #999;
}
.w112{
    width: 112px;
}
.w86{
    width: 86px;
}
.w62{
    width: 62px;
}
.w56{
    width: 56px;
}
.w106{
    width: 106px;
}
.taskbar{
    display: flex;
    height: 32px;
    background: #000;
    color: #fff;
}
.start{
    display: flex;
    align-items: center;
    justify-content: center;
    width: 42px;
}
.search{
    display: flex;
    align-items: center;
    gap: 9px;
    width: 302px;
    padding-left: 10px;
    background: #f0f0f0;
}
.search input{
    flex: 1;
    min-width: 0;
    padding: 0;
    border: 0;
    outline: 0;
    background: none;
    font: 12px "Open Sans", sans-serif;
}
.search input::placeholder{
    color: #444;
}
.task{
    display: flex;
    flex: none;
    align-items: center;
    justify-content: center;
    width: 43px;
}
.task svg{
    max-width: 21px;
    max-height: 21px;
}
.run{
    background: linear-gradient(#76b9ed,#76b9ed) center bottom / 35px 2px no-repeat;
}
.more{
    background-image: linear-gradient(90deg,#76b9ed 28px,#4b7a9e 28px);
}
.cur{
    background-color: #333;
    background-size: 100% 2px;
}
.hover{
    background: #1c1c1c;
}
.tray{
    display: flex;
    align-items: center;
    gap: 9px;
    margin-left: auto;
    padding-right: 12px;
}
.clock{
    display: flex;
    flex-direction: column;
    align-items: center;
    padding-right: 6px;
}
```
FILE: script.js
```js
// symbol, direction, row colour, bid, bid colour, ask, ask colour, daily change
var quotes = [
    ["AUDCHF","down","mint","0.559...","r","0.559...","r","0.07%"],
    ["AUDJPY","up","mint","111.9...","b","111.9...","r","0.12%"],
    ["AUDNZD","down","mint","1.204...","r","1.204...","r","-0.19%"],
    ["AUDUSD","up","green","0.708...","b","0.708...","b","-0.01%"],
    ["BTCUSD","up","violet","7050...","b","7053...","b","0.18%"],
    ["CADJPY","down","mint","115.0...","r","115.0...","r","0.14%"],
    ["CHFJPY","up","mint","200.2...","b","200.2...","b","0.07%"],
    ["ETHUSD","up","violet","2157....","b","2158....","b","0.40%"],
    ["EURCHF","down","mint","0.912...","r","0.912...","r","-0.06%"],
    ["EURGBP","down","mint","0.861...","r","0.862...","b","-0.04%"],
    ["EURJPY","down","green","182.7...","r","182.7...","r","-0.00%"],
    ["EURUSD","up","green","1.156...","b","1.156...","b","-0.12%"],
    ["FR40","up","grey","7836....","b","7844....","b","-0.57%"],
    ["GBPAUD","up","mint","1.893...","b","1.893...","r","-0.03%"],
    ["GBPCAD","up","mint","1.842...","b","1.842...","r","-0.07%"],
    ["GBPJPY","down","mint","211.9...","r","211.9...","r","0.05%"],
    ["GBPNZD","down","mint","2.280...","r","2.280...","r","-0.27%"],
    ["GBPUSD","up","green","1.341...","b","1.341...","b","-0.08%"],
    ["NZDCAD","up","mint","0.807...","b","0.808...","b","0.21%"],
    ["NZDJPY","up","mint","92.937","b","92.958","b","0.34%"],
    ["NZDUSD","up","green","0.588...","b","0.588...","b","0.21%"],
    ["USDCAD","down","green","1.373...","r","1.373...","r","-0.01%"],
    ["USDCHF","down","green","0.788...","r","0.788...","r","0.08%"],
    ["USDJPY","down","green","157.9...","r","157.9...","r","0.13%"],
    ["XAUUSD","up","pale","4675....","b","4676....","b","0.39%"]
];
var experts = ["Bneu News Filter Pro","Bneu News Filter","Bneu Prop Firm Challenge M","Bneu Prop Firm Challenge M",
    "Bneu Prop Firm Simulator Pr","Bneu Prop Firm Simulator","Bneu Smart Money Concept","Bneu Smart Money Concept",
    "Bneu Trade Copier Pro","Bneu Trade Copier","Bneu Trade Journal Pro","Bneu Trade Journal","Bneu Trade Manager",
    "Bneu TradeManager Pro","BneuAIHorizon","BneuAIHorizonFree","BneuAIImpulseEA","BneuAIImpulseEA_Free","BneuAINexus",
    "BneuAINexusFree","BneuAIOmniScanner","BneuAIOmniScannerFree","BneuAISentinel","BneuAISentinel_Free",
    "BneuAIStratosEA","BneuAIStratosEA_Free","BneuAIVortexEA"];

document.getElementById("quotes").innerHTML = quotes.map(function(q){
    var day = q[7].charAt(0) == "-" ? "r" : "b";
    return '<tr class="' + q[2] + '"><td><span class="sym"><svg width="8" height="8"><use href="#i-' + q[1] + '"/></svg>' + q[0] + '</span></td>' +
        '<td class="' + q[4] + '">' + q[3] + '</td><td class="' + q[6] + '">' + q[5] + '</td><td class="' + day + '">' + q[7] + '</td></tr>';
}).join("");
document.getElementById("tree").innerHTML = experts.map(function(name){
    return '<li><svg width="14" height="12"><use href="#i-ea"/></svg>' + name + '</li>';
}).join("");

// candles from bar 39 on: 1 = up, 0 = down, then high, body top, body bottom, low on the base plot height
var FIRST = 39, LAST = 117, STEP = 14.04, BASE = 889;
var candles = [
    [0,194,194,207,207],[1,190,202,208,226],[0,183,200,201,212],[1,164,171,202,203],[1,161,171,172,178],[0,159,171,181,183],
    [0,167,171,186,192],[1,168,171,186,187],[0,170,171,185,193],[1,150,150,186,196],[0,147,150,158,162],[1,142,151,158,161],
    [1,130,136,151,153],[0,127,136,161,162],[0,157,160,176,182],[1,150,160,176,177],[1,148,155,160,164],[0,153,155,175,176],
    [0,166,174,190,201],[1,173,185,189,193],[1,156,173,186,191],[1,145,166,174,182],[0,160,166,179,185],[0,164,178,193,226],
    [1,181,186,193,201],[1,177,186,187,194],[1,176,184,186,190],[0,182,184,189,195],[1,180,186,189,190],[0,183,188,190,198],
    [1,183,185,190,191],[1,172,183,186,189],[0,167,183,192,202],[0,179,190,201,203],[0,193,200,202,209],[0,198,201,208,215],
    [1,186,193,208,211],[1,167,176,193,195],[0,168,175,197,203],[0,194,197,207,221],[1,195,200,207,211],[0,200,200,234,247],
    [0,225,234,287,294],[0,283,287,355,370],[0,349,354,360,421],[0,336,359,372,390],[0,357,371,382,384],[1,342,347,382,384],
    [1,330,342,348,352],[0,330,342,395,396],[0,377,395,409,415],[0,400,408,445,459],[1,414,420,434,463],[1,409,417,421,430],
    [1,400,411,418,420],[1,375,399,411,423],[1,382,387,399,411],[0,377,387,398,398],[0,393,397,399,405],[0,393,399,431,432],
    [0,410,430,519,542],[0,490,519,570,571],[0,552,569,596,627],[0,572,595,611,626],[0,580,610,639,655],[0,609,638,676,677],
    [0,673,676,785,845],[1,719,719,785,885],[0,680,719,747,775],[0,694,745,754,796],[0,710,753,770,781],[1,707,725,770,785],
    [1,716,716,726,754],[1,660,687,717,717],[1,662,668,687,689],[0,642,665,698,699],[1,681,687,698,701],[1,657,680,687,689],
    [1,635,643,681,694]
];
var times = ["13 Mar 2026","13 Mar 05:00","13 Mar 09:00","13 Mar 13:00","13 Mar 17:00","13 Mar 21:00","16 Mar 02:00","16 Mar 06:00",
    "16 Mar 10:00","16 Mar 14:00","16 Mar 18:00","16 Mar 22:00","17 Mar 03:00","17 Mar 07:00","17 Mar 11:00","17 Mar 15:00",
    "17 Mar 19:00","18 Mar 00:00","18 Mar 04:00","18 Mar 08:00","18 Mar 12:00","18 Mar 16:00","18 Mar 20:00","19 Mar 01:00",
    "19 Mar 05:00","19 Mar 09:00","19 Mar 13:00","19 Mar 17:00","19 Mar 21:00","20 Mar 02:00"];
var days = [22,45,68,91,114];

function line(x1,y1,x2,y2,color,dash){
    return '<path d="M' + x1 + ' ' + y1 + 'L' + x2 + ' ' + y2 + '" stroke="' + color + '"' + (dash ? ' stroke-dasharray="' + dash + '"' : '') + '/>';
}
function rect(x,y,w,h,color){
    return '<rect x="' + x + '" y="' + y + '" width="' + w + '" height="' + h + '" fill="' + color + '"/>';
}
function text(x,y,s,color){
    return '<text x="' + x + '" y="' + y + '"' + (color ? ' style="fill:' + color + '"' : '') + '>' + s + '</text>';
}
function draw(){
    var svg = document.getElementById("plot");
    var w = svg.clientWidth - 47, h = svg.clientHeight - 17;
    var k = h / BASE, s = "", i, x, y;
    function bar(n){
        return Math.round(w - 20 - (LAST - n) * STEP) + 0.5;
    }
    for(i = LAST + 1; bar(i) > 0; i -= 2){
        s += line(bar(i),1,bar(i),h,"#000070","4 3");
    }
    for(i = 0; i < 35; i++){
        y = Math.round((5 + i * 25.27) * k) + 0.5;
        s += line(0,y,w,y,"#000070","4 3");
        s += line(w,y,w + 4,y,"#c8c8c8");
        s += text(w + 5,y + 3,(5131.9 - i * 18.08).toFixed(2));
    }
    days.forEach(function(d){
        s += line(bar(d),1,bar(d),h,"#e0e0e0","3 2");
    });
    y = Math.round(643 * k) + 0.5;
    s += line(0,y + 1,w,y + 1,"#4a5560") + line(0,y,w,y,"#e03c3c");
    s += rect(0,53 * k,3,4,"#006400") + rect(38,15 * k,10,3,"#a52a2a");
    candles.forEach(function(c,n){
        var color = c[0] ? "#006400" : "#a52a2a";
        x = bar(FIRST + n);
        s += line(x,c[1] * k,x,c[4] * k,color);
        s += rect(x - 5,c[2] * k,10,Math.max(1,(c[3] - c[2]) * k),color);
    });
    s += line(0,0.5,w,0.5,"#aaa") + line(w + 0.5,0,w + 0.5,h,"#d0d0d0") + line(0,h + 0.5,w,h + 0.5,"#d0d0d0") + line(0.5,0,0.5,h,"#aaa");
    times.forEach(function(t,n){
        x = bar(n * 4);
        s += line(x,h,x,h + 4,"#d0d0d0") + text(x,h + 11,t);
    });
    s += rect(w + 3,y - 6,34,2,"#e03030") + rect(w + 3,y - 5,34,10,"#778899") + text(w + 5,y + 3,"4674.89","#000");
    svg.innerHTML = s;
}
draw();
window.onresize = draw;
```
